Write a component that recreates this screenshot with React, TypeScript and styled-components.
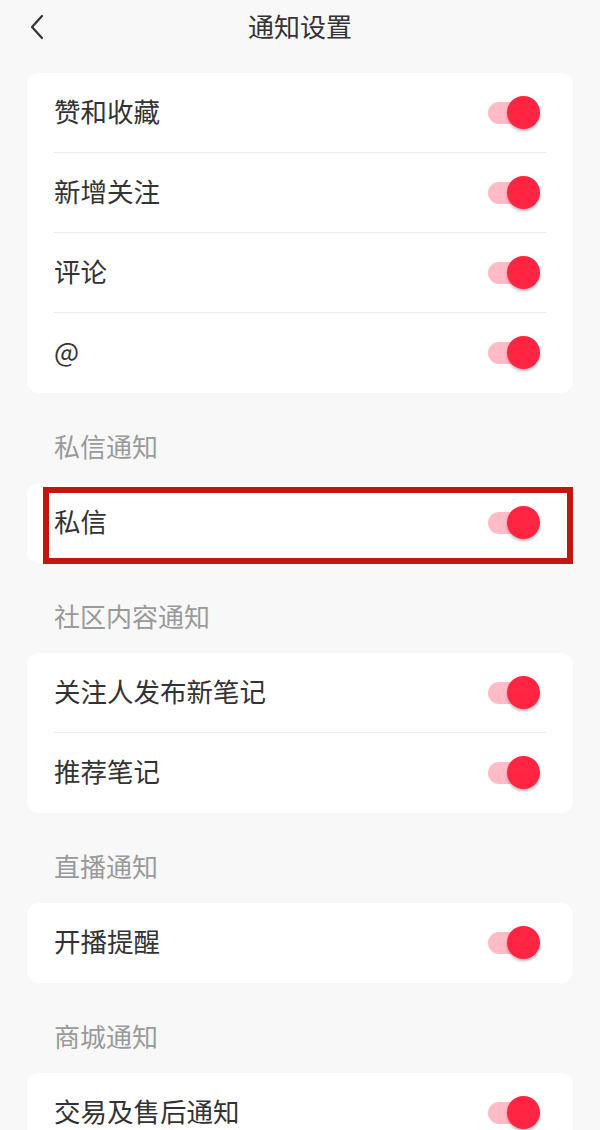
import React from "react";
import styled, { createGlobalStyle } from "styled-components";

const GlobalStyle = createGlobalStyle`
  html, body {
    margin: 0;
    padding: 0;
    background: #f8f8f8;
  }
  body {
    font-family: "Noto Sans CJK SC", "Noto Sans", sans-serif;
    color: #333;
  }
`;

const Page = styled.div`
  width: 600px;
  height: 1130px;
  overflow: hidden;
  background: #f8f8f8;
`;

const TopBar = styled.div`
  position: relative;
  height: 56px;
  display: flex;
  align-items: center;
  justify-content: center;
`;

const BackButton = styled.div`
  position: absolute;
  left: 26px;
  top: 12px;
  width: 22px;
  height: 30px;
  display: flex;
  align-items: center;
  justify-content: center;
`;

const Title = styled.h1`
  margin: 0 0 4px;
  font-size: 26px;
  font-weight: 400;
  line-height: 50px;
  color: #333;
`;

const Content = styled.div`
  padding: 17px 27px 0;
`;

const Card = styled.div`
  position: relative;
  background: #fff;
  border-radius: 12px;
`;

const Row = styled.div<{ $divider?: boolean }>`
  position: relative;
  height: 80px;
  display: flex;
  align-items: center;
  justify-content: space-between;
  padding: 0 33px 0 27px;
  &::after {
    content: "";
    display: ${p => (p.$divider ? "block" : "none")};
    position: absolute;
    left: 27px;
    right: 27px;
    bottom: 0;
    height: 1px;
    background: #ececec;
  }
`;

const Label = styled.span`
  font-size: 26.5px;
  color: #333;
  line-height: 1;
  margin-bottom: 4px;
`;

const SectionTitle = styled.div`
  padding: 39px 0 23px 27px;
  font-size: 26px;
  line-height: 28px;
  color: #9a9a9a;
`;

const Switch = styled.div`
  position: relative;
  width: 52px;
  height: 34px;
  display: flex;
  align-items: center;
`;

const Track = styled.div`
  width: 44px;
  height: 22px;
  border-radius: 11px;
  background: #ffbcc6;
`;

const Knob = styled.div`
  position: absolute;
  right: 0;
  top: 0;
  width: 33px;
  height: 33px;
  border-radius: 50%;
  background: #ff2442;
  box-shadow: 0 2px 3px rgba(0, 0, 0, 0.28);
`;

const Highlight = styled.div`
  position: absolute;
  left: 16px;
  right: 0;
  top: 4px;
  bottom: -1px;
  border: 6.5px solid #c3170d;
  pointer-events: none;
`;

type Item = { label: string };
type Section = { title?: string; items: Item[]; highlight?: boolean };

const sections: Section[] = [
  { items: [{ label: "赞和收藏" }, { label: "新增关注" }, { label: "评论" }, { label: "@" }] },
  { title: "私信通知", items: [{ label: "私信" }], highlight: true },
  { title: "社区内容通知", items: [{ label: "关注人发布新笔记" }, { label: "推荐笔记" }] },
  { title: "直播通知", items: [{ label: "开播提醒" }] },
  { title: "商城通知", items: [{ label: "交易及售后通知" }] },
];

const Toggle = () => (
  <Switch>
    <Track />
    <Knob />
  </Switch>
);

const App = () => {
  return (
    <Page>
      <GlobalStyle />
      <TopBar>
        <BackButton>
          <svg width="16" height="26" viewBox="0 0 16 26">
            <path d="M13 2 L3 13 L13 24" fill="none" stroke="#333" strokeWidth="2.2" strokeLinecap="round" strokeLinejoin="round" />
          </svg>
        </BackButton>
        <Title>通知设置</Title>
      </TopBar>
      <Content>
        {sections.map((section, i) => (
          <div key={i}>
            {section.title && <SectionTitle>{section.title}</SectionTitle>}
            <Card>
              {section.items.map((item, j) => (
                <Row key={item.label} $divider={j < section.items.length - 1}>
                  <Label>{item.label}</Label>
                  <Toggle />
                </Row>
              ))}
              {section.highlight && <Highlight />}
            </Card>
          </div>
        ))}
      </Content>
    </Page>
  );
};

export default App;
